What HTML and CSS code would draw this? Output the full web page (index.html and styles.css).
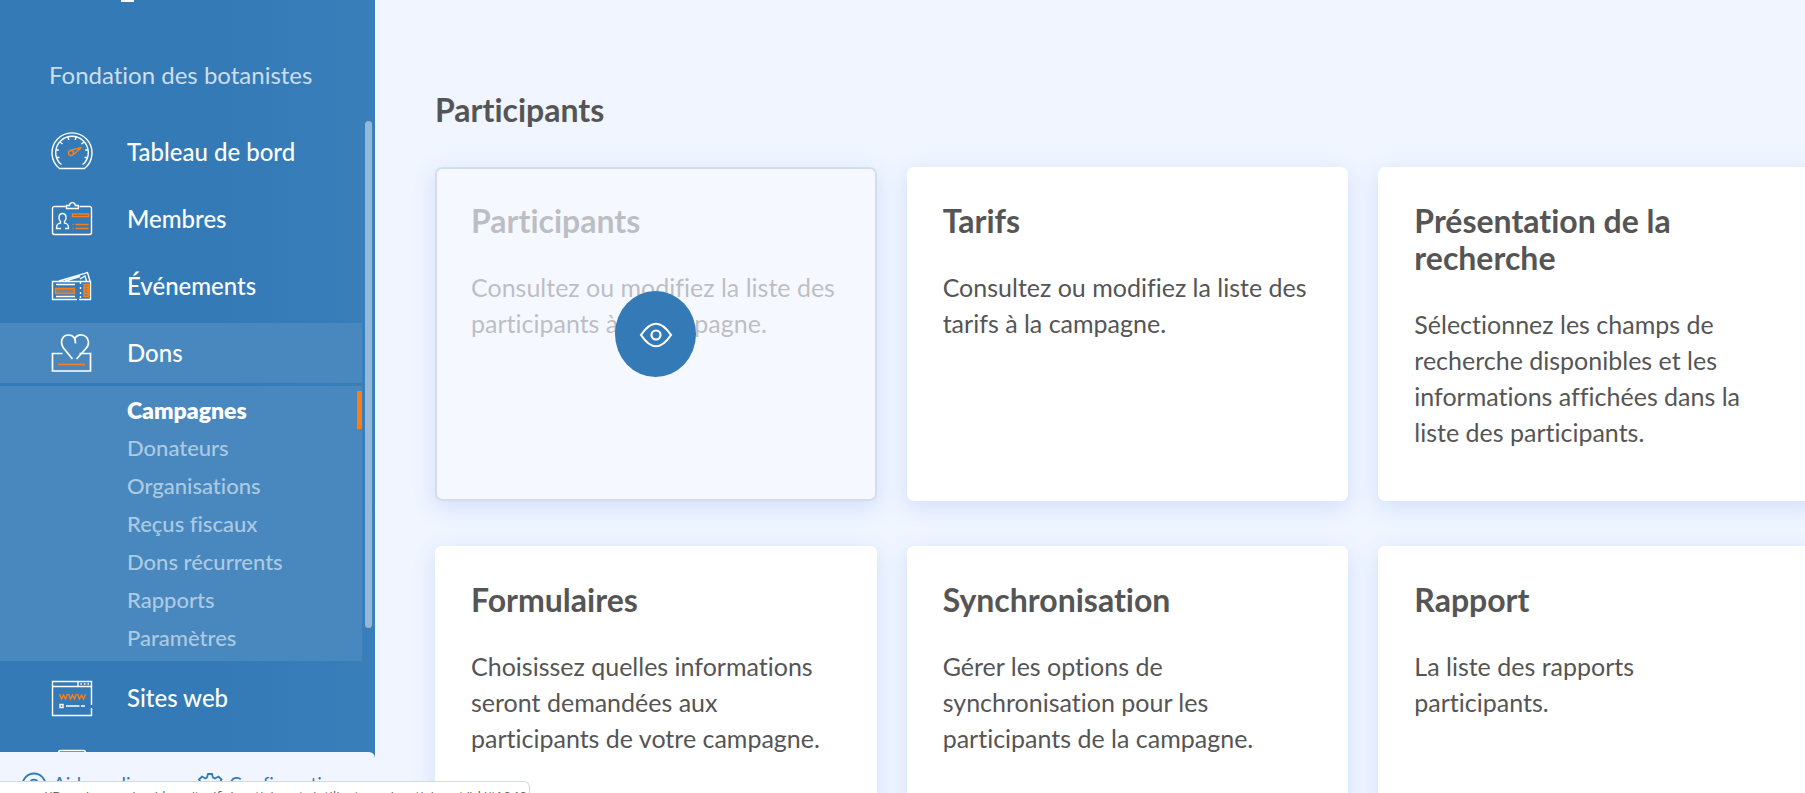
FILE: index.html
```html
<!DOCTYPE html>
<html lang="fr">
<head>
<meta charset="utf-8">
<title>Participants</title>
<link rel="stylesheet" href="styles.css">
</head>
<body>
<div class="app">
  <aside class="sidebar">
    <div class="brand"><span class="brand-mark"></span></div>
    <p class="org">Fondation des botanistes</p>
    <nav class="menu">
      <a class="item" href="#">
        <svg class="icon" viewBox="0 0 42 42"><path d="M8.500 37.500A20 20 0 1 1 33.500 37.500Z"/><path d="M10.500 33.500L8.500 32A16.300 16.300 0 1 1 33.500 32L31.500 33.500M4.800 19h3M5.500 26.500h3M9 11l2.500 2M17 6l.8 3M25 6l-.8 3M33 11l-2.500 2M37.200 19h-3M36.500 26.500h-3"/><g class="accent"><circle cx="20" cy="22" r="2.500"/><path d="M19 19.500L30.500 16.500L22.500 23.500"/></g></svg>
        <span class="label">Tableau de bord</span>
      </a>
      <a class="item" href="#">
        <svg class="icon" viewBox="0 0 42 42"><path d="M14.500 8.500H3.500a2 2 0 0 0-2 2v24a2 2 0 0 0 2 2h35a2 2 0 0 0 2-2v-24a2 2 0 0 0-2-2H28.500M15.500 10.500V7.500h3a2.800 2.800 0 0 1 5.800 0h3v3ZM10 30.500H5.500c0-4 1-5 4-5.500v-1.500c-3-3.500-1.500-8 2-8s5 4.500 2 8V25c3 .5 4 1.500 4 5.500H14"/><g class="accent"><path d="M21.500 16h16v2.500h-16ZM21.500 26.500h1M24.500 26.500h13M21.500 30.500h1M24.500 30.500h13"/></g></svg>
        <span class="label">Membres</span>
      </a>
      <a class="item" href="#">
        <svg class="icon" viewBox="0 0 42 42"><path d="M26 34.500H1.500v-18h38v18H28M8 16L36.500 7.500L39 16M14 16l15-4.500M29 14l5-3 1.500 5M5 19.500h19M5 31.500h19M29.500 17v2M29.500 22v2M29.500 27v2M29.500 31v2"/><g class="accent"><path class="tint" d="M4.500 23.500h19v5h-19Z"/><path class="tint" d="M33 19.500h4.500v12H33ZM33 22.500h4.500M33 25.500h4.500M33 28.500h4.500"/></g></svg>
        <span class="label">Événements</span>
      </a>
      <a class="item item-open" href="#">
        <svg class="icon thick" viewBox="0 0 42 42"><path d="M11.500 21.500H1.500v17.500h38v-17.500H28.500M21.500 27L12.500 16C8 9 12 3 17.500 3 22 3 24.500 6 24.500 11.500M23.500 7C27 1 35 2 37 8 38.500 12 37 14.500 34.500 17L25.500 27"/><path class="accent" d="M7 32.500h27"/></svg>
        <span class="label">Dons</span>
      </a>
      <div class="submenu">
        <a class="sub sub-active" href="#">Campagnes</a>
        <a class="sub" href="#">Donateurs</a>
        <a class="sub" href="#">Organisations</a>
        <a class="sub" href="#">Reçus fiscaux</a>
        <a class="sub" href="#">Dons récurrents</a>
        <a class="sub" href="#">Rapports</a>
        <a class="sub" href="#">Paramètres</a>
      </div>
      <a class="item" href="#">
        <svg class="icon" viewBox="0 0 42 42"><path d="M40.500 28V4.500h-39v34h39V31M1.500 9.500h39M27 5v4M29.500 7h1.500M33 7h1.500M36.500 7h1.500M9 27.500h3v3H9ZM15 29h13.500M30 29h4"/><path class="accent" d="M8.500 17l2 5 2-4 2 4 2-5M17.500 17l2 5 2-4 2 4 2-5M26.500 17l2 5 2-4 2 4 2-5"/></svg>
        <span class="label">Sites web</span>
      </a>
      <a class="item" href="#" aria-label="Boutique">
        <svg class="icon" viewBox="0 0 42 42"><path d="M7.500 36V8.500a2 2 0 0 1 2-2h23a2 2 0 0 1 2 2V36"/></svg>
      </a>
    </nav>
    <div class="scrollbar"></div>
    <footer class="tools">
      <a class="tool" href="#"><svg class="tool-icon" viewBox="0 0 26 26"><circle cx="13" cy="13" r="11.500"/><path d="M9.500 11c0-4.500 7-4.500 7 0 0 3-3.500 2.500-3.500 5"/></svg>Aide en ligne</a>
      <a class="tool" href="#"><svg class="tool-icon" viewBox="0 0 26 26"><path d="M11 2h4l1 3.500 2 1 3.500-2 3 3-2 3.500 1 2 3 1v4l-3 1-2 4H5l-2-4-2-1v-4l2-1 1-2-2-3.500 3-3 3.500 2 1.500-1Z"/></svg>Configuration</a>
    </footer>
  </aside>

  <main class="main">
    <h1 class="title">Participants</h1>
    <div class="cards">
      <section class="card card-hover">
        <h2 class="title">Participants</h2>
        <p class="text">Consultez ou modifiez la liste des participants à la campagne.</p>
        <div class="veil"><button class="view" type="button" aria-label="Voir"><svg class="eye" viewBox="0 0 32 26"><path d="M1 14C11-1 21-1 31 14C21 29 11 29 1 14Z"/><circle cx="16" cy="14" r="4.500"/></svg></button></div>
      </section>
      <section class="card">
        <h2 class="title">Tarifs</h2>
        <p class="text">Consultez ou modifiez la liste des tarifs à la campagne.</p>
      </section>
      <section class="card">
        <h2 class="title">Présentation de la recherche</h2>
        <p class="text">Sélectionnez les champs de recherche disponibles et les informations affichées dans la liste des participants.</p>
      </section>
      <section class="card">
        <h2 class="title">Formulaires</h2>
        <p class="text">Choisissez quelles informations seront demandées aux participants de votre campagne.</p>
      </section>
      <section class="card">
        <h2 class="title">Synchronisation</h2>
        <p class="text">Gérer les options de synchronisation pour les participants de la campagne.</p>
      </section>
      <section class="card">
        <h2 class="title">Rapport</h2>
        <p class="text">La liste des rapports<br>participants.</p>
      </section>
    </div>
  </main>
  <div class="status">://Base/campaign/dons/tarifs/participants/utilisateurs/participant/id/#1040</div>
</div>
</body>
</html>
```
FILE: styles.css
```css
* { box-sizing: border-box; }
body { margin: 0; font-family: Lato, sans-serif; font-variant-ligatures: none; color: #555; background: #f0f5ff; }
a { color: inherit; text-decoration: none; }
h1, h2, p { margin: 0; }
svg { fill: none; flex: none; }

.app { position: relative; display: flex; height: 100vh; overflow: hidden; }

.sidebar { position: relative; flex: none; display: flex; flex-direction: column; width: 375px; color: #fff; background: linear-gradient(90deg, #337ab7 60%, #397fba); }
.brand { height: 57px; padding-left: 121px; }
.brand-mark { display: block; width: 13px; height: 2px; background: #fff; }
.org { padding-left: 49px; font-size: 24px; line-height: 36px; color: #cddeed; }
.menu { flex: 1; display: flex; flex-direction: column; gap: 7px; min-height: 0; padding-top: 29px; margin-right: 13px; overflow: hidden; }
.item { flex: none; display: flex; align-items: center; gap: 34px; height: 60px; padding-left: 51px; font-size: 24px; font-weight: 500; }
.label { padding-bottom: 2px; }
.item-open { background: #4888be; }
.icon { width: 42px; height: 42px; stroke: #fff; stroke-width: 1.4; }
.thick { stroke-width: 1.7; }
.accent { stroke: #f97f1c; }
.tint { fill: #8b7f81; }
.submenu { flex: none; margin-top: -4px; padding: 5px 0 4px; background: #4888be; }
.sub { display: block; padding-left: 127px; font-size: 22px; font-weight: 500; line-height: 38px; color: #adcae3; }
.sub-active { font-size: 23px; font-weight: 800; color: #fff; border-right: 5px solid #ff7d12; }
.scrollbar { position: absolute; right: 3px; top: 121px; width: 7px; height: 507px; border-radius: 4px; background: #94b8da; }
.tools { flex: none; display: flex; gap: 36px; height: 41px; padding: 20px 20px 0 21px; overflow: hidden; color: #337ab7; background: #f0f5ff; border-top-right-radius: 6px; }
.tool { display: flex; gap: 6px; height: 26px; font-size: 19px; line-height: 24px; }
.tool-icon { width: 26px; height: 26px; stroke: #337ab7; stroke-width: 1.8; }

.main { flex: 1; min-width: 0; padding: 91px 0 0 60px; margin-right: -15px; }
.title { font-size: 32px; font-weight: 700; line-height: 37px; }
.cards { display: grid; grid-template-columns: repeat(3, 1fr); grid-auto-rows: 1fr; gap: 45px 30px; margin-top: 39px; }
.card { position: relative; padding: 35px 36px 51px; border-radius: 7px; background: #fff; box-shadow: 0 6px 22px #cfdffa; }
.text { margin-top: 30px; font-size: 25px; line-height: 36px; }
.veil { position: absolute; inset: 0; display: grid; place-items: center; border: 2px solid #d4ddea; border-radius: 7px; background: rgba(245, 248, 255, .65); }
.card-hover { background: #f9faff; }
.view { display: grid; place-items: center; width: 81px; height: 86px; padding: 0; border: 0; border-radius: 50%; background: #337ab7; }
.eye { width: 32px; height: 26px; stroke: #fff; stroke-width: 2.2; overflow: visible; }

.status { position: absolute; left: 0; bottom: 0; width: 530px; height: 12px; padding: 5px 0 0 38px; overflow: hidden; font: 14px/20px "Open Sans", sans-serif; white-space: nowrap; color: #666; background: #fff; border: 1px solid #d5d9e0; border-width: 1px 1px 0 0; border-top-right-radius: 6px; }
```
